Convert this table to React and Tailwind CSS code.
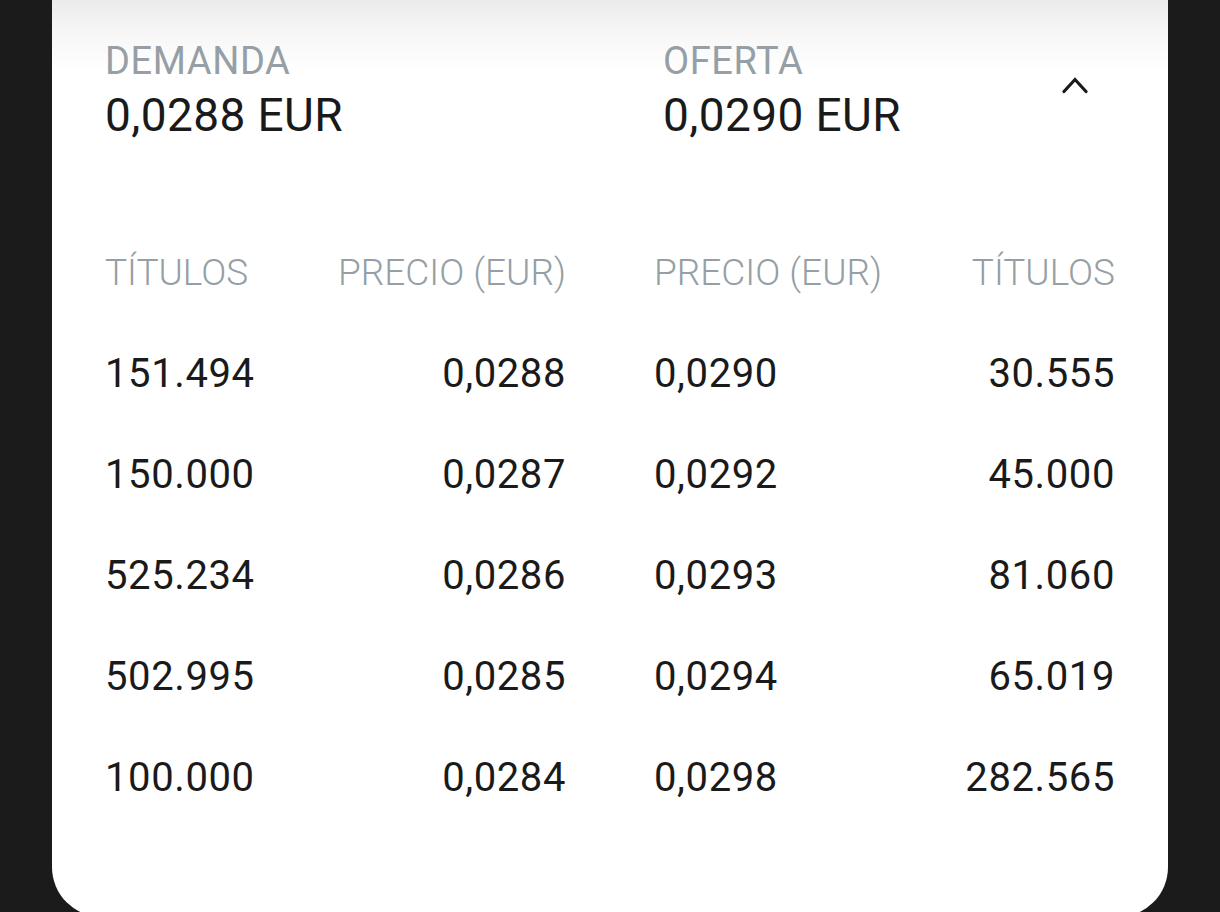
import React from 'react';

const bids = [
  ['151.494', '0,0288'],
  ['150.000', '0,0287'],
  ['525.234', '0,0286'],
  ['502.995', '0,0285'],
  ['100.000', '0,0284'],
];

const asks = [
  ['0,0290', '30.555'],
  ['0,0292', '45.000'],
  ['0,0293', '81.060'],
  ['0,0294', '65.019'],
  ['0,0298', '282.565'],
];

const ChevronUp = () => (
  <svg width="26" height="18" viewBox="0 0 26 18" fill="none" stroke="#1a1a1a" strokeWidth="3.2" strokeLinecap="round" strokeLinejoin="miter">
    <path d="M2 15.5 L13 3.5 L24 15.5" />
  </svg>
);

export default function App() {
  return (
    <div className="h-[912px] overflow-hidden bg-[#1b1b1b] px-[52px]" style={{ fontFamily: 'Roboto, "Noto Sans", sans-serif' }}>
      <div className="h-[917px] rounded-b-[50px] bg-[linear-gradient(to_bottom,#ebebeb_0px,#f6f6f6_30px,#ffffff_72px)] px-[53px] text-[#1a1a1a]">
        {/* Resumen demanda / oferta */}
        <div className="flex items-start pt-[38px]">
          <div className="w-[558px]">
            <div className="text-[38px] leading-[46px] tracking-[0.6px] text-[#959fa5]">DEMANDA</div>
            <div className="mt-[4px] text-[46px] leading-[54px] tracking-[0.4px]">0,0288 EUR</div>
          </div>
          <div className="flex-1">
            <div className="text-[38px] leading-[46px] tracking-[0.6px] text-[#959fa5]">OFERTA</div>
            <div className="mt-[4px] text-[46px] leading-[54px] tracking-[0.4px]">0,0290 EUR</div>
          </div>
          <div className="mr-[27px] mt-[38px]">
            <ChevronUp />
          </div>
        </div>

        {/* Libro de órdenes */}
        <div className="mt-[106px] grid grid-cols-2 gap-x-[88px]">
          <div>
            <div className="flex h-[50px] items-center justify-between text-[37px] font-light text-[#959fa5]">
              <span>TÍTULOS</span>
              <span>PRECIO (EUR)</span>
            </div>
            {bids.map(([qty, price]) => (
              <div key={qty + price} className="mt-[51px] flex h-[50px] items-center justify-between text-[40px] tracking-[0.6px]">
                <span>{qty}</span>
                <span>{price}</span>
              </div>
            ))}
          </div>
          <div>
            <div className="flex h-[50px] items-center justify-between text-[37px] font-light text-[#959fa5]">
              <span>PRECIO (EUR)</span>
              <span>TÍTULOS</span>
            </div>
            {asks.map(([price, qty]) => (
              <div key={qty + price} className="mt-[51px] flex h-[50px] items-center justify-between text-[40px] tracking-[0.6px]">
                <span>{price}</span>
                <span>{qty}</span>
              </div>
            ))}
          </div>
        </div>
      </div>
    </div>
  );
}
